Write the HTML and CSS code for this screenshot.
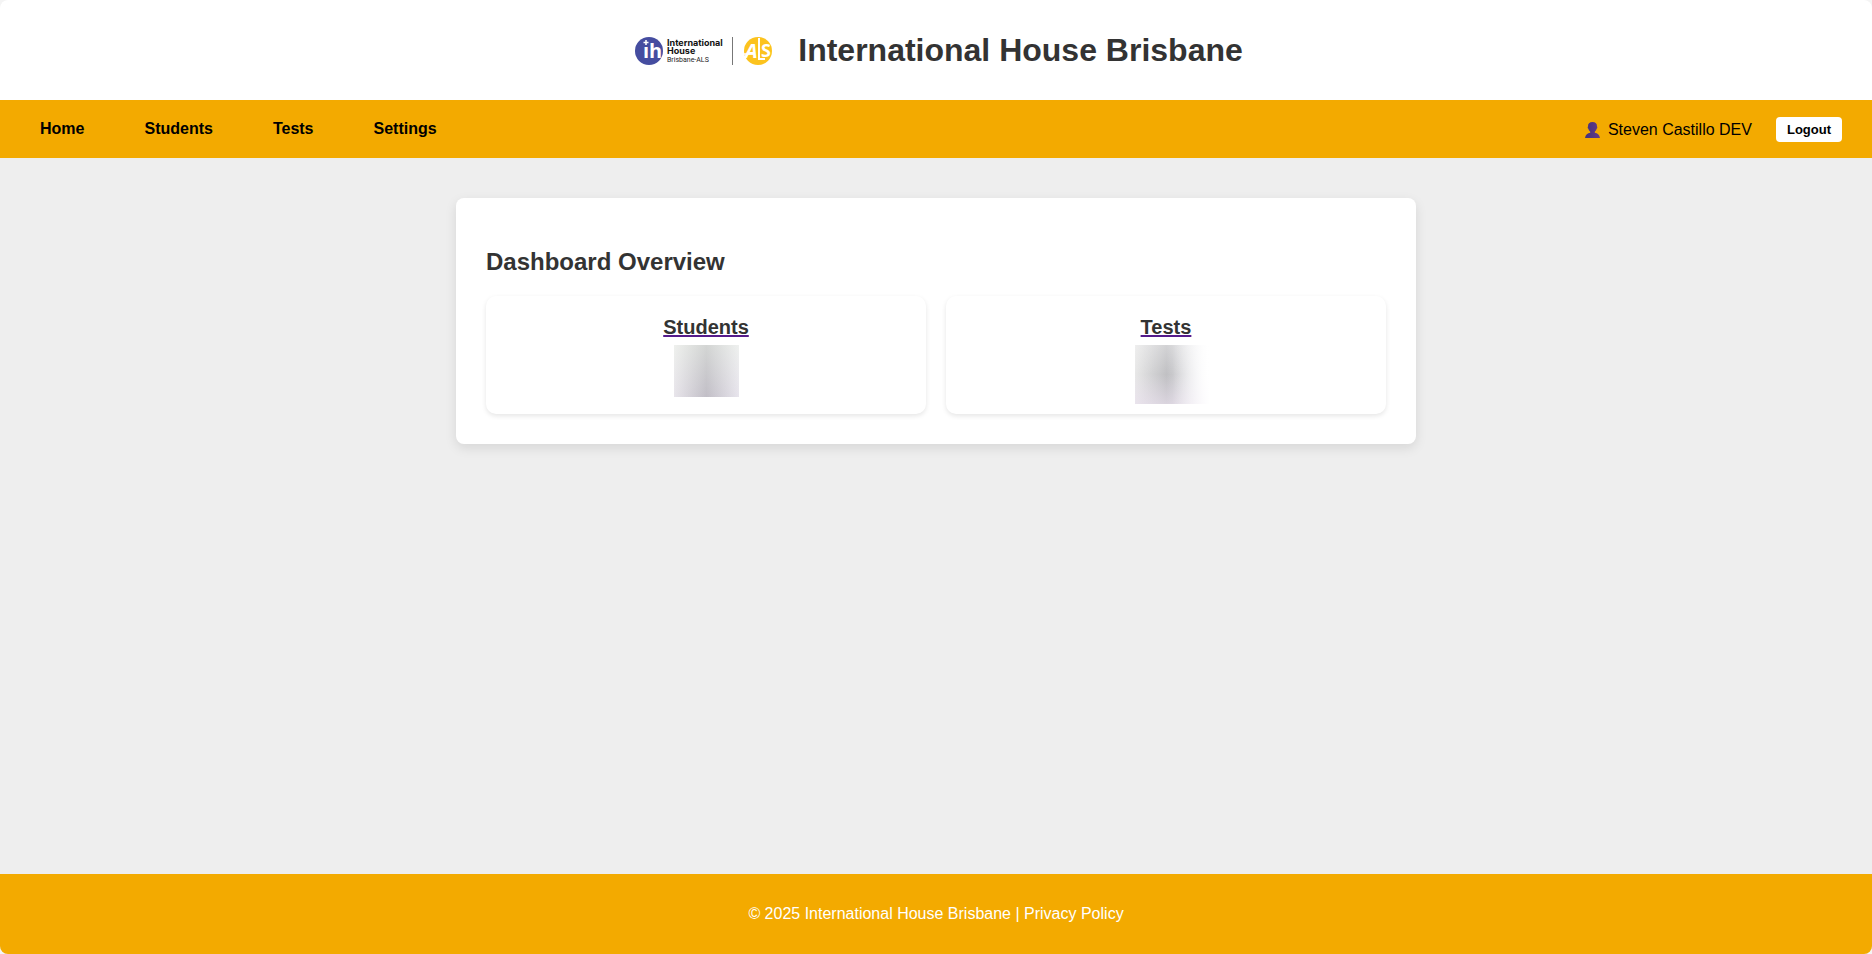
FILE: index.html
```html
<!DOCTYPE html>
<html lang="en">
<head>
<meta charset="utf-8">
<title>International House Brisbane</title>
<meta name="viewport" content="width=device-width, initial-scale=1">
<link rel="stylesheet" href="styles.css">
</head>
<body>
<div class="page">
  <header class="header">
    <svg class="logo" viewBox="0 0 149 50" role="img" aria-label="International House Brisbane-ALS">
      <circle cx="20" cy="26" r="14" fill="#454da0"/>
      <text class="logo-ih" x="14" y="33">ıh</text>
      <path d="M17 15v5M14.500 17.500h5" stroke="#fff" stroke-width="1.500"/>
      <text class="logo-name" x="38" y="21">International</text>
      <text class="logo-name" x="38" y="29">House</text>
      <text class="logo-sub" x="38" y="37">Brisbane-ALS</text>
      <path d="M103.500 12v28" stroke="#777" stroke-width="1"/>
      <circle cx="129" cy="26" r="14" fill="#fcc31e"/>
      <text class="logo-als" x="116" y="33">A</text>
      <path d="M130 13v21h6" fill="none" stroke="#fff" stroke-width="2"/>
      <text class="logo-s" x="132" y="32">S</text>
      <path d="M114 29h12" stroke="#fff" stroke-width="1.500"/>
    </svg>
    <h1>International House Brisbane</h1>
  </header>
  <nav class="nav">
    <div class="links">
      <a href="#home">Home</a>
      <a href="#students">Students</a>
      <a href="#tests">Tests</a>
      <a href="#settings">Settings</a>
    </div>
    <div class="account">
      <span class="user">
        <svg class="avatar" viewBox="0 0 15 16" aria-hidden="true">
          <defs><linearGradient id="skin" x1="0" x2="1"><stop offset="0" stop-color="#42307c"/><stop offset="1" stop-color="#653b86"/></linearGradient></defs>
          <path fill="url(#skin)" d="M7.500 0C10.500 0 12.200 1.700 12 4.500c.6.600.3 2-.4 2.300-.3 1.400-1 2.200-1.800 2.900v1c2.600.5 4.700 1.900 5.200 5.300H0c.5-3.400 2.600-4.800 5.200-5.300v-1C4.400 9 3.700 8.200 3.400 6.800c-.7-.3-1-1.700-.4-2.300C2.800 1.700 4.500 0 7.500 0z"/>
        </svg>
        Steven Castillo DEV
      </span>
      <button type="button" class="logout">Logout</button>
    </div>
  </nav>
  <main class="main">
    <section class="panel">
      <h2>Dashboard Overview</h2>
      <div class="cards">
        <article class="card">
          <a href="#students"><h3>Students</h3></a>
          <div class="count count-students"></div>
        </article>
        <article class="card">
          <a href="#tests"><h3>Tests</h3></a>
          <div class="count count-tests"></div>
        </article>
      </div>
    </section>
  </main>
  <footer class="footer">
    <p>© 2025 International House Brisbane | <a href="#privacy">Privacy Policy</a></p>
  </footer>
</div>
</body>
</html>
```
FILE: styles.css
```css
* { box-sizing: border-box; }
body {
  margin: 0;
  font-family: "Liberation Sans", Arial, sans-serif;
  font-size: 16px;
  color: #333;
  background: #f4f4f4;
}
.page {
  display: flex;
  flex-direction: column;
  min-height: 100vh;
  border-radius: 8px;
  overflow: hidden;
  background: #eee;
}
.header {
  display: flex;
  justify-content: center;
  align-items: center;
  gap: 20px;
  padding: 25px 20px;
  background: #fff;
}
.logo { width: 149px; height: 50px; }
.logo-ih { font: 700 20px "Open Sans", sans-serif; fill: #fff; }
.logo-name { font: 700 9px "Inter", sans-serif; fill: #111; }
.logo-sub { font: 400 7px "Roboto", sans-serif; fill: #222; }
.logo-als { font: italic 700 20px "Open Sans", sans-serif; fill: #fff; }
.logo-s { font: 700 18px "Open Sans", sans-serif; fill: #fff; }
h1 { margin: 0; font-size: 32px; line-height: 36px; }
.nav {
  display: flex;
  justify-content: space-between;
  align-items: center;
  padding: 16px 30px 16px 40px;
  background: #f3aa00;
  color: #000;
}
.links { display: flex; gap: 60px; }
.links a { color: #000; font-weight: 700; text-decoration: none; }
.account { display: flex; align-items: center; gap: 24px; }
.user { display: flex; align-items: center; gap: 8px; padding-top: 2px; line-height: 24px; }
.avatar { width: 15px; height: 16px; }
.logout {
  padding: 5px 11px;
  border: 0;
  border-radius: 4px;
  background: #fff;
  color: #000;
  font: 700 13px/15px "Liberation Sans", Arial, sans-serif;
}
.main { flex: 1; padding: 40px 20px; }
.panel {
  max-width: 960px;
  margin: 0 auto;
  padding: 30px;
  border-radius: 8px;
  background: #fff;
  box-shadow: 0 4px 12px rgba(0, 0, 0, 0.1);
}
h2 { margin: 20px 0; font-size: 24px; line-height: 28px; }
.cards { display: grid; grid-template-columns: 1fr 1fr; gap: 20px; }
.card {
  display: flex;
  flex-direction: column;
  align-items: center;
  gap: 6px;
  padding: 20px 20px 10px;
  border-radius: 10px;
  background: #fff;
  box-shadow: 0 2px 5px rgba(0, 0, 0, 0.1);
}
.card a { color: #551a8b; }
h3 { margin: 0; font-size: 20px; line-height: 23px; color: #333; }
.count-students {
  width: 65px;
  height: 52px;
  background:
    linear-gradient(rgba(240, 244, 238, 0.5), rgba(220, 210, 230, 0.3)),
    linear-gradient(90deg, #ededed, #b6b6b9 50%, #ededf0);
}
.count-tests {
  width: 75px;
  height: 59px;
  margin-left: 12px;
  background:
    linear-gradient(90deg, rgba(255, 255, 255, 0) 50%, #fff),
    linear-gradient(rgba(254, 254, 254, 0.3), rgba(254, 254, 254, 0) 50%, rgba(235, 225, 240, 0.6)),
    linear-gradient(90deg, #e8e8e8, #c0c0c3 42%, #ededf0 85%, #fff);
}
.footer { padding: 30px 20px; background: #f3aa00; color: #fff; text-align: center; }
.footer p { margin: 0; line-height: 20px; }
.footer a { color: #fff; text-decoration: none; }
```
